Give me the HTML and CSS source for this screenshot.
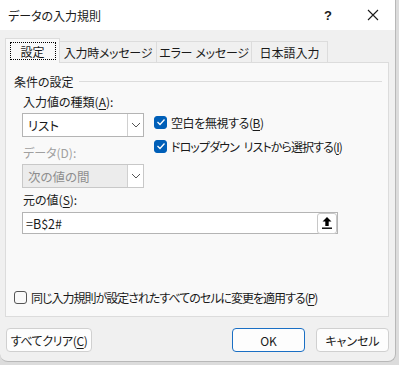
FILE: index.html
```html
<!DOCTYPE html>
<html lang="ja">
<head>
<meta charset="utf-8">
<link rel="stylesheet" href="styles.css">
</head>
<body>
<div class="window">
  <div class="titlebar">
    <span class="title">データの入力規則</span>
    <span class="help">?</span>
    <span class="close">
      <svg width="12" height="12" viewBox="0 0 12 12"><path d="M1 1 L11 11 M11 1 L1 11" stroke="#1a1a1a" stroke-width="1.1" fill="none"/></svg>
    </span>
  </div>
  <div class="tabs">
    <div class="tab active"><span class="focus">設定</span></div>
    <div class="tab">入力時メッセージ</div>
    <div class="tab">エラー メッセージ</div>
    <div class="tab">日本語入力</div>
  </div>
  <div class="panel">
    <div class="group-title"><span>条件の設定</span><span class="rule"></span></div>
    <div class="cond">
      <div class="cond-left">
        <div class="label">入力値の種類(<u>A</u>):</div>
        <div class="select">
          <span class="select-text">リスト</span>
          <span class="select-btn"><svg width="10" height="6" viewBox="0 0 10 6"><path d="M1 1 L5 5 L9 1" stroke="#555" stroke-width="1" fill="none"/></svg></span>
        </div>
        <div class="label disabled">データ(D):</div>
        <div class="select is-disabled">
          <span class="select-text">次の値の間</span>
          <span class="select-btn"><svg width="10" height="6" viewBox="0 0 10 6"><path d="M1 1 L5 5 L9 1" stroke="#555" stroke-width="1" fill="none"/></svg></span>
        </div>
      </div>
      <div class="cond-right">
        <div class="check-row">
          <span class="box checked"><svg width="10" height="8" viewBox="0 0 10 8"><path d="M1.5 4 L4 6.5 L8.5 1.5" stroke="#fff" stroke-width="1.3" fill="none"/></svg></span>
          <span class="t1">空白を無視する(<u>B</u>)</span>
        </div>
        <div class="check-row">
          <span class="box checked"><svg width="10" height="8" viewBox="0 0 10 8"><path d="M1.5 4 L4 6.5 L8.5 1.5" stroke="#fff" stroke-width="1.3" fill="none"/></svg></span>
          <span class="t2">ドロップダウン リストから選択する(<u>I</u>)</span>
        </div>
      </div>
    </div>
    <div class="label src-label">元の値(<u>S</u>):</div>
    <div class="src-input">
      <span class="src-text">=B$2#</span>
      <span class="ref-btn"><svg width="12" height="14" viewBox="0 0 12 14"><path d="M6 1 L1.5 5.5 H4.3 V10 H7.7 V5.5 H10.5 Z" fill="#000"/><rect x="1" y="11.5" width="10" height="1.4" fill="#000"/></svg></span>
    </div>
    <div class="spacer"></div>
    <div class="check-row bottom-check">
      <span class="box"></span>
      <span class="t3">同じ入力規則が設定されたすべてのセルに変更を適用する(<u>P</u>)</span>
    </div>
  </div>
  <div class="footer">
    <button class="btn clear">すべてクリア(<u>C</u>)</button>
    <span class="grow"></span>
    <button class="btn primary">OK</button>
    <button class="btn">キャンセル</button>
  </div>
</div>
</body>
</html>
```

FILE: styles.css
```css
* { box-sizing: border-box; }
html, body {
  margin: 0;
  padding: 0;
  background: #dcdcdc;
  width: 399px;
  height: 365px;
  overflow: hidden;
}
body {
  font-family: "Noto Sans CJK JP", "Noto Sans", sans-serif;
  font-size: 12px;
  color: #1a1a1a;
  font-feature-settings: "palt";
}
.window {
  width: 396px;
  height: 362px;
  background: #f0f0f0;
  border-radius: 0 0 8px 8px;
  border-right: 1px solid #b8b8b8;
  border-bottom: 1px solid #b8b8b8;
  display: flex;
  flex-direction: column;
  overflow: hidden;
}
.titlebar {
  height: 30px;
  background: #fff;
  display: flex;
  align-items: center;
  padding-left: 8px;
  flex-shrink: 0;
}
.title { flex: 1; font-size: 12px; }
.help { width: 10px; margin-right: 33px; font-size: 13px; font-weight: 600; font-family: "Liberation Sans", sans-serif; }
.close { width: 12px; margin-right: 16px; display: flex; }
.tabs {
  display: flex;
  align-items: flex-end;
  padding-left: 5px;
  margin-top: 8px;
  height: 24px;
  flex-shrink: 0;
}
.tab {
  height: 21px;
  border: 1px solid #dcdcdc;
  border-bottom: none;
  padding: 0;
  display: flex;
  align-items: center;
  justify-content: center;
  font-size: 12px;
  margin-left: -1px;
  background: #f0f0f0;
  white-space: nowrap;
}
.tab:nth-child(2) { width: 98px; letter-spacing: -0.3px; }
.tab:nth-child(3) { width: 96px; letter-spacing: -0.3px; word-spacing: 1px; }
.tab:nth-child(4) { width: 77px; }
.tab.active {
  height: 25px;
  width: 55px;
  margin-left: 0;
  background: #f9f9f9;
  position: relative;
  z-index: 1;
  margin-bottom: -1px;
}
.focus {
  border: 1px dotted #000;
  width: 46px;
  height: 18px;
  display: flex;
  align-items: center;
  justify-content: center;
}
.panel {
  margin-left: 5px;
  width: 384px;
  height: 255px;
  background: #f9f9f9;
  border: 1px solid #dcdcdc;
  display: flex;
  flex-direction: column;
  padding: 9px 6px 0 8px;
  flex-shrink: 0;
}
.group-title {
  display: flex;
  align-items: center;
  height: 18px;
}
.rule {
  flex: 1;
  height: 1px;
  background: #dcdcdc;
  margin-left: 5px;
}
.cond {
  display: flex;
  padding-left: 9px;
  margin-top: 4px;
}
.cond-left { width: 131px; display: flex; flex-direction: column; }
.label { height: 16px; line-height: 16px; white-space: nowrap; }
.label.disabled { color: #a0a0a0; margin-top: 8px; }
.select {
  margin-top: 3px;
  width: 122px;
  height: 24px;
  border: 1px solid #b4b4b4;
  background: #fff;
  display: flex;
  align-items: stretch;
  margin-left: -1px;
}
.select-text { flex: 1; padding-left: 5px; display: flex; align-items: center; font-size: 12.5px; }
.select-btn {
  width: 16px;
  border-left: 1px solid #d0d0d0;
  display: flex;
  align-items: center;
  justify-content: center;
  background: #fff;
}
.select.is-disabled { background: #ececec; border-color: #c8c8c8; }
.select.is-disabled .select-text { color: #8e8e8e; }
.select.is-disabled .select-btn { background: #fff; }
.cond-right {
  display: flex;
  flex-direction: column;
  padding-top: 19px;
  gap: 6px;
}
.check-row {
  display: flex;
  align-items: center;
  height: 18px;
  gap: 4px;
  white-space: nowrap;
}
.t1 { letter-spacing: -0.4px; }
.t2 { letter-spacing: -0.9px; word-spacing: 3px; }
.t3 { letter-spacing: -1px; }
.box {
  width: 13px;
  height: 13px;
  border-radius: 3px;
  border: 1px solid #555;
  display: flex;
  align-items: center;
  justify-content: center;
  flex-shrink: 0;
}
.box.checked { background: #005fb8; border-color: #005fb8; }
.src-label { margin-left: 9px; margin-top: 4px; }
.src-input {
  margin-top: 4px;
  width: 316px;
  height: 22px;
  border: 1px solid #b4b4b4;
  background: #fff;
  display: flex;
  align-items: center;
  margin-left: 8px;
}
.src-text { flex: 1; padding-left: 3px; font-size: 12.5px; }
.ref-btn {
  width: 20px;
  height: 21px;
  border: 1px solid #c8c8c8;
  border-radius: 3px;
  background: #fff;
  display: flex;
  align-items: center;
  justify-content: center;
}
.spacer { flex: 1; }
.bottom-check { margin-bottom: 10px; }
.footer {
  display: flex;
  padding: 11px 6px 0 6px;
  gap: 11px;
}
.grow { flex: 1; }
.btn {
  font-family: inherit;
  font-size: 12px;
  font-feature-settings: "palt";
  color: #1a1a1a;
  background: #fdfdfd;
  border: 1px solid #d0d0d0;
  border-radius: 4px;
  height: 24px;
  padding: 0;
  min-width: 73px;
  white-space: nowrap;
}
.btn.clear { width: 86px; letter-spacing: -0.4px; }
.btn.primary { border-color: #1a6fc4; }
u { text-decoration-thickness: 1px; text-underline-offset: 2px; }
```
